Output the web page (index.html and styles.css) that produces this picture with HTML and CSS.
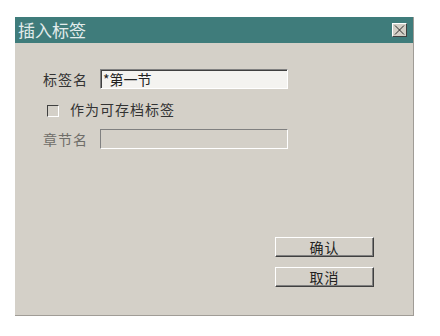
FILE: index.html
```html
<!DOCTYPE html>
<html lang="zh-CN">
  <head>
    <meta charset="UTF-8" />
    <title>插入标签</title>
    <link rel="stylesheet" href="styles.css">
  </head>
  <body>
    <div class="dialog">
      <!-- Title bar -->
      <div class="titlebar">
        <span class="title">插入标签</span>
        <span class="close-btn">
          <svg width="11" height="10" viewBox="0 0 11 10">
            <path d="M1 0.5 L10 9.5 M10 0.5 L1 9.5" stroke="#2a2a2a" stroke-width="1" fill="none" />
          </svg>
        </span>
      </div>

      <div class="dialog-body">
        <div class="form">
          <div class="form-row">
            <label class="label">标签名</label>
            <div class="field">*第一节</div>
          </div>
          <div class="form-row check-row">
            <span class="checkbox"></span>
            <span class="check-label">作为可存档标签</span>
          </div>
          <div class="form-row">
            <label class="label disabled">章节名</label>
            <div class="field disabled"></div>
          </div>
        </div>

        <div class="actions">
          <button class="btn">确认</button>
          <button class="btn">取消</button>
        </div>
      </div>
    </div>
  </body>
</html>
```

FILE: styles.css
```css
body {
  margin: 0;
  padding: 17px 0 0 15px;
  background: #ffffff;
  font-family: "Noto Sans CJK SC", "DejaVu Sans", sans-serif;
}

.dialog {
  width: 398px;
  height: 298px;
  background: #d4d0c8;
  border-right: 1px solid #a09c96;
  border-bottom: 1px solid #a09c96;
  display: flex;
  flex-direction: column;
}

.titlebar {
  height: 26px;
  background: #3f7c7b;
  display: flex;
  align-items: center;
  justify-content: space-between;
  padding: 0 6px 0 3px;
}

.title {
  color: #e3ecec;
  font-size: 17px;
  line-height: 26px;
}

.close-btn {
  width: 13px;
  height: 12px;
  background: #d4d0c8;
  border-top: 1px solid #ffffff;
  border-left: 1px solid #ffffff;
  border-right: 1px solid #404040;
  border-bottom: 1px solid #404040;
  display: flex;
  align-items: center;
  justify-content: center;
}

.dialog-body {
  flex: 1;
  display: flex;
  flex-direction: column;
  padding: 26px 39px 28px 28px;
}

.form {
  display: flex;
  flex-direction: column;
  gap: 10px;
}

.form-row {
  height: 20px;
  display: flex;
  align-items: center;
}

.label {
  width: 57px;
  font-size: 14px;
  letter-spacing: 1px;
  color: #333333;
}

.label.disabled {
  color: #6f6d69;
}

.field {
  width: 184px;
  height: 18px;
  padding-left: 2px;
  background: #f4f3f0;
  border-top: 1px solid #808080;
  border-left: 1px solid #808080;
  border-right: 1px solid #ffffff;
  border-bottom: 1px solid #ffffff;
  box-shadow: inset 1px 1px 0 #404040;
  font-size: 14px;
  line-height: 18px;
  color: #222222;
}

.field.disabled {
  background: #d4d0c8;
  box-shadow: none;
}

.check-row {
  padding-left: 4px;
}

.checkbox {
  width: 10px;
  height: 10px;
  margin-top: 3px;
  border-top: 1px solid #404040;
  border-left: 1px solid #404040;
  border-right: 1px solid #ffffff;
  border-bottom: 1px solid #ffffff;
}

.check-label {
  margin-left: 11px;
  font-size: 14px;
  letter-spacing: 1px;
  color: #333333;
}

.actions {
  margin-top: auto;
  align-self: flex-end;
  display: flex;
  flex-direction: column;
  gap: 10px;
}

.btn {
  width: 99px;
  height: 20px;
  padding: 0;
  background: #d4d0c8;
  border-top: 1px solid #ffffff;
  border-left: 1px solid #ffffff;
  border-right: 1px solid #404040;
  border-bottom: 1px solid #404040;
  box-shadow: inset -1px -1px 0 #808080;
  font-family: "Noto Sans CJK SC", sans-serif;
  font-size: 14px;
  letter-spacing: 1px;
  line-height: 17px;
  color: #222222;
}
```
